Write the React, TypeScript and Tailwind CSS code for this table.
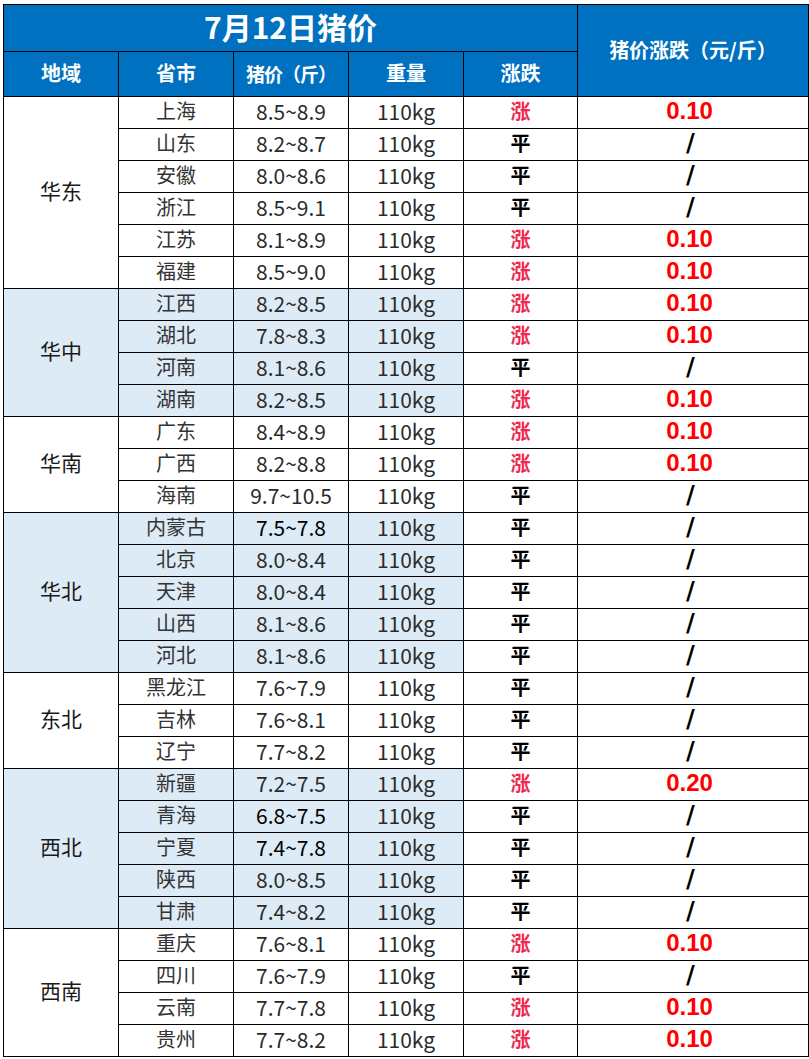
import React from "react";

type Row = { p: string; price: string; up: boolean; chg: string; strong?: boolean };
type Group = { region: string; blue: boolean; span: string; rows: Row[] };

const U = (p: string, price: string, chg = "0.10"): Row => ({ p, price, up: true, chg });
const F = (p: string, price: string, strong = false): Row => ({ p, price, up: false, chg: "/", strong });

const groups: Group[] = [
  {
    region: "华东",
    blue: false,
    span: "row-span-6",
    rows: [U("上海", "8.5~8.9"), F("山东", "8.2~8.7"), F("安徽", "8.0~8.6"), F("浙江", "8.5~9.1"), U("江苏", "8.1~8.9"), U("福建", "8.5~9.0")],
  },
  {
    region: "华中",
    blue: true,
    span: "row-span-4",
    rows: [U("江西", "8.2~8.5"), U("湖北", "7.8~8.3"), F("河南", "8.1~8.6"), U("湖南", "8.2~8.5")],
  },
  {
    region: "华南",
    blue: false,
    span: "row-span-3",
    rows: [U("广东", "8.4~8.9"), U("广西", "8.2~8.8"), F("海南", "9.7~10.5")],
  },
  {
    region: "华北",
    blue: true,
    span: "row-span-5",
    rows: [F("内蒙古", "7.5~7.8", true), F("北京", "8.0~8.4"), F("天津", "8.0~8.4"), F("山西", "8.1~8.6"), F("河北", "8.1~8.6")],
  },
  {
    region: "东北",
    blue: false,
    span: "row-span-3",
    rows: [F("黑龙江", "7.6~7.9"), F("吉林", "7.6~8.1"), F("辽宁", "7.7~8.2")],
  },
  {
    region: "西北",
    blue: true,
    span: "row-span-5",
    rows: [U("新疆", "7.2~7.5", "0.20"), F("青海", "6.8~7.5", true), F("宁夏", "7.4~7.8", true), F("陕西", "8.0~8.5"), F("甘肃", "7.4~8.2")],
  },
  {
    region: "西南",
    blue: false,
    span: "row-span-4",
    rows: [U("重庆", "7.6~8.1"), F("四川", "7.6~7.9"), U("云南", "7.7~7.8"), U("贵州", "7.7~8.2")],
  },
];

const cell = "flex items-center justify-center border-r border-b border-black";
const hdr = `${cell} bg-[#0070c0] text-white font-bold`;

export default function App() {
  return (
    <div
      className="w-[809px] h-[1059px] bg-white overflow-hidden pl-[3px] pt-[4px]"
      style={{ fontFamily: '"Noto Sans CJK SC", "Noto Sans", sans-serif' }}
    >
      <div className="grid grid-cols-[115px_115px_115px_115px_114px_231px] grid-rows-[47px_45px_repeat(30,32px)] border-l border-t border-black w-max">
        <div className={`${hdr} col-span-5 text-[30px] leading-none pb-[4px]`}>7月12日猪价</div>
        <div className={`${hdr} row-span-2 text-[20px] leading-none pb-[2px]`}>猪价涨跌（元/斤）</div>
        <div className={`${hdr} text-[20px] leading-none pb-[2px]`}>地域</div>
        <div className={`${hdr} text-[20px] leading-none pb-[2px]`}>省市</div>
        <div className={`${hdr} text-[19px] leading-none tracking-[-1px] pb-[2px]`}>猪价（斤）</div>
        <div className={`${hdr} text-[20px] leading-none pb-[2px]`}>重量</div>
        <div className={`${hdr} text-[20px] leading-none pb-[2px]`}>涨跌</div>

        {groups.map((g) => {
          const bg = g.blue ? "bg-[#ddebf7]" : "bg-white";
          return (
            <React.Fragment key={g.region}>
              <div className={`${cell} ${bg} ${g.span} text-[21px] text-[#1a1a1a] leading-none pb-[4px]`}>{g.region}</div>
              {g.rows.map((r) => (
                <React.Fragment key={r.p}>
                  <div className={`${cell} ${bg} text-[20px] text-[#333333] leading-none pb-[3px]`}>{r.p}</div>
                  <div
                    className={`${cell} ${bg} text-[21px] leading-none pb-[3px] ${r.strong ? "text-black" : "text-[#2b2b2b]"}`}
                  >
                    {r.price}
                  </div>
                  <div className={`${cell} ${bg} text-[21px] text-[#2b2b2b] leading-none pb-[3px]`}>110kg</div>
                  <div
                    className={`${cell} bg-white text-[20px] font-bold leading-none pb-[3px] ${r.up ? "text-[#ee2a4f]" : "text-black"}`}
                  >
                    {r.up ? "涨" : "平"}
                  </div>
                  {r.up ? (
                    <div
                      className={`${cell} bg-white font-bold leading-none pr-[7px] pb-[4px] text-[#ff0000] text-[24px]`}
                      style={{ fontFamily: '"Liberation Sans", Arial, sans-serif' }}
                    >
                      {r.chg}
                    </div>
                  ) : (
                    <div
                      className={`${cell} bg-white font-bold leading-none pr-[5px] pb-[4px] text-black text-[24px]`}
                      style={{ fontFamily: '"DejaVu Sans", sans-serif' }}
                    >
                      /
                    </div>
                  )}
                </React.Fragment>
              ))}
            </React.Fragment>
          );
        })}
      </div>
    </div>
  );
}
